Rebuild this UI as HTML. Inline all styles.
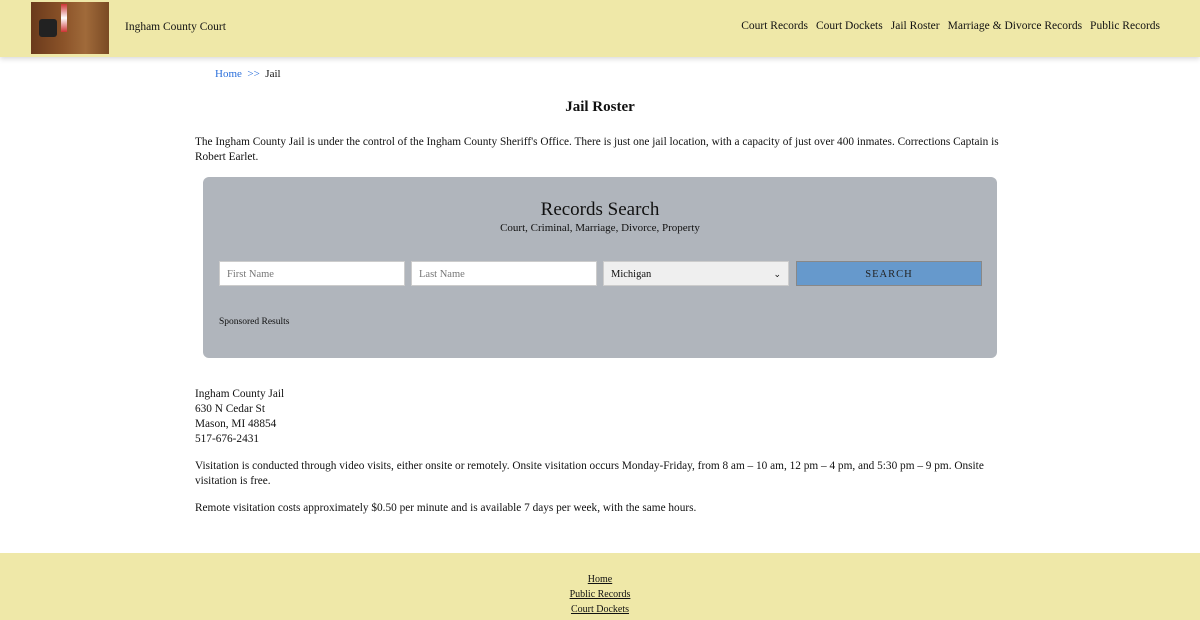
<!DOCTYPE html>
<html><head><style>
body{margin:0;width:1200px;height:620px;overflow:hidden;font-family:"Liberation Serif",serif;color:#111;background:#fff}
.hdr{position:absolute;left:0;top:0;width:1200px;height:57px;background:#efe8a8;box-shadow:0 2px 5px rgba(0,0,0,.15)}
.img{position:absolute;left:31px;top:2px;width:78px;height:52px;background:linear-gradient(90deg,#6a3a1c,#8a5228 40%,#a06a3a 70%,#7a4a24)}
.img:after{content:"";position:absolute;left:8px;top:17px;width:18px;height:18px;background:#222;border-radius:3px}
.img:before{content:"";position:absolute;left:30px;top:2px;width:6px;height:28px;background:linear-gradient(#c33,#fff,#c33)}
.t{position:absolute;font-size:11.3px}
.nav{position:absolute;top:20px;right:40px;font-size:11.5px}
.nav span{margin-left:8px}
.box{position:absolute;left:203px;top:177px;width:794px;height:181px;background:#b0b5bc;border-radius:6px}
.in{position:absolute;top:84px;height:25px;width:186px;box-sizing:border-box;font-size:10.5px;padding:7px 7px;color:#777;background:#fff;border:1px solid #ccc}
</style></head><body>
<div class="hdr"><div class="img"></div>
<div class="t" style="left:125px;top:21px;font-size:11.5px">Ingham County Court</div>
<div class="nav"><span>Court Records</span><span>Court Dockets</span><span>Jail Roster</span><span>Marriage &amp; Divorce Records</span><span>Public Records</span></div></div>
<div class="t" style="left:215px;top:68px;font-size:11px"><span style="color:#2a6fdb">Home &nbsp;&gt;&gt;</span> &nbsp;Jail</div>
<div class="t" style="left:0;width:1200px;text-align:center;top:99px;font-size:15px;font-weight:bold">Jail Roster</div>
<div class="t" style="left:195px;top:135px;width:815px;line-height:15px">The Ingham County Jail is under the control of the Ingham County Sheriff's Office. There is just one jail location, with a capacity of just over 400 inmates. Corrections Captain is Robert Earlet.</div>
<div class="box">
<div class="t" style="width:794px;text-align:center;top:22px;font-size:19px">Records Search</div>
<div class="t" style="width:794px;text-align:center;top:45px;font-size:11px">Court, Criminal, Marriage, Divorce, Property</div>
<div class="in" style="left:16px">First Name</div>
<div class="in" style="left:208px">Last Name</div>
<div class="in" style="left:400px;background:#efefef;color:#111">Michigan<span style="float:right;font-size:9px">&#8964;</span></div>
<div class="in" style="left:593px;background:#6699cc;color:#222;border-color:#888;text-align:center;letter-spacing:1px">SEARCH</div>
<div class="t" style="left:16px;top:140px;font-size:9.5px">Sponsored Results</div>
</div>
<div class="t" style="left:195px;top:387px;line-height:15px">Ingham County Jail<br>630 N Cedar St<br>Mason, MI 48854<br>517-676-2431</div>
<div class="t" style="left:195px;top:459px;width:815px;line-height:15px">Visitation is conducted through video visits, either onsite or remotely. Onsite visitation occurs Monday-Friday, from 8 am – 10 am, 12 pm – 4 pm, and 5:30 pm – 9 pm. Onsite visitation is free.</div>
<div class="t" style="left:195px;top:502px">Remote visitation costs approximately $0.50 per minute and is available 7 days per week, with the same hours.</div>
<div style="position:absolute;left:0;top:553px;width:1200px;height:67px;background:#efe8a8;text-align:center;font-size:10px;line-height:15px;padding-top:19px;box-sizing:border-box;text-decoration:underline">Home<br>Public Records<br>Court Dockets</div>
</body></html>
